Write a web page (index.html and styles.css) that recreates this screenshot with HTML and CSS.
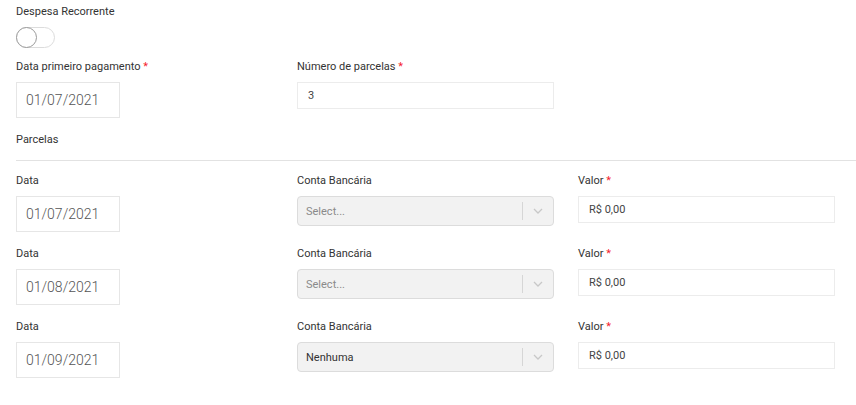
FILE: index.html
```html
<!DOCTYPE html>
<html lang="pt-BR">
<head>
<meta charset="utf-8">
<link rel="stylesheet" href="styles.css">
</head>
<body>
<div class="page">
  <div class="label">Despesa Recorrente</div>
  <div class="toggle"><span class="knob"></span></div>

  <div class="grid top-row">
    <div class="field">
      <div class="label">Data primeiro pagamento <span class="req">*</span></div>
      <div class="date">01/07/2021</div>
    </div>
    <div class="field">
      <div class="label">Número de parcelas <span class="req">*</span></div>
      <div class="input">3</div>
    </div>
  </div>

  <div class="label parcelas">Parcelas</div>
  <div class="divider"></div>

  <div class="grid row">
    <div class="field">
      <div class="label">Data</div>
      <div class="date">01/07/2021</div>
    </div>
    <div class="field">
      <div class="label">Conta Bancária</div>
      <div class="select"><span class="placeholder">Select...</span><span class="sep"></span><svg class="chev" width="10" height="6" viewBox="0 0 10 6"><path d="M1 1l4 4 4-4" fill="none" stroke="#c8c8c8" stroke-width="1.3"/></svg></div>
    </div>
    <div class="field">
      <div class="label">Valor <span class="req">*</span></div>
      <div class="input">R$ 0,00</div>
    </div>
  </div>

  <div class="grid row">
    <div class="field">
      <div class="label">Data</div>
      <div class="date">01/08/2021</div>
    </div>
    <div class="field">
      <div class="label">Conta Bancária</div>
      <div class="select"><span class="placeholder">Select...</span><span class="sep"></span><svg class="chev" width="10" height="6" viewBox="0 0 10 6"><path d="M1 1l4 4 4-4" fill="none" stroke="#c8c8c8" stroke-width="1.3"/></svg></div>
    </div>
    <div class="field">
      <div class="label">Valor <span class="req">*</span></div>
      <div class="input">R$ 0,00</div>
    </div>
  </div>

  <div class="grid row">
    <div class="field">
      <div class="label">Data</div>
      <div class="date">01/09/2021</div>
    </div>
    <div class="field">
      <div class="label">Conta Bancária</div>
      <div class="select"><span class="value">Nenhuma</span><span class="sep"></span><svg class="chev" width="10" height="6" viewBox="0 0 10 6"><path d="M1 1l4 4 4-4" fill="none" stroke="#c8c8c8" stroke-width="1.3"/></svg></div>
    </div>
    <div class="field">
      <div class="label">Valor <span class="req">*</span></div>
      <div class="input">R$ 0,00</div>
    </div>
  </div>
</div>
</body>
</html>
```

FILE: styles.css
```css
* { box-sizing: border-box; }
html, body { margin: 0; background: #fff; }
body {
  font-family: Roboto, "Liberation Sans", Arial, sans-serif;
  color: #333;
}
.page {
  padding: 5px 0 0 16px;
}
.label {
  font-size: 11px;
  line-height: 14px;
  height: 14px;
  color: #333;
  white-space: nowrap;
}
.req { color: #f5222d; }
.toggle {
  margin-top: 8px;
  width: 39px;
  height: 21px;
  border: 1px solid #dcdcdc;
  border-radius: 11px;
  position: relative;
  background: #fff;
}
.knob {
  position: absolute;
  left: -1px;
  top: -1px;
  width: 21px;
  height: 21px;
  border-radius: 50%;
  border: 1px solid #9a9a9a;
  background: #fff;
}
.grid {
  display: grid;
  grid-template-columns: 257px 257px 257px;
  column-gap: 24px;
  align-items: start;
}
.top-row { margin-top: 12px; }
.row { margin-top: 13px; }
.row + .row { margin-top: 15px; }
.field .label { margin-bottom: 8px; }
.date {
  width: 104px;
  height: 36px;
  border: 1px solid #e6e6e6;
  padding-left: 9px;
  font-size: 14px;
  font-weight: 300;
  line-height: 34px;
  color: #555;
}
.input {
  height: 27px;
  border: 1px solid #ececec;
  padding-left: 10px;
  font-size: 11px;
  line-height: 25px;
  color: #444;
}
.parcelas { margin-top: 15px; }
.divider {
  margin-top: 13px;
  height: 1px;
  background: #e2e2e2;
}
.select {
  height: 30px;
  border: 1px solid #dcdcdc;
  border-radius: 4px;
  background: #f2f2f2;
  display: flex;
  align-items: center;
  padding-left: 8px;
  font-size: 11px;
}
.placeholder { color: #8a8a8a; flex: 1; }
.value { color: #333; flex: 1; }
.sep {
  width: 1px;
  height: 18px;
  background: #d6d6d6;
}
.chev { margin: 0 10px 0 10px; }
```
